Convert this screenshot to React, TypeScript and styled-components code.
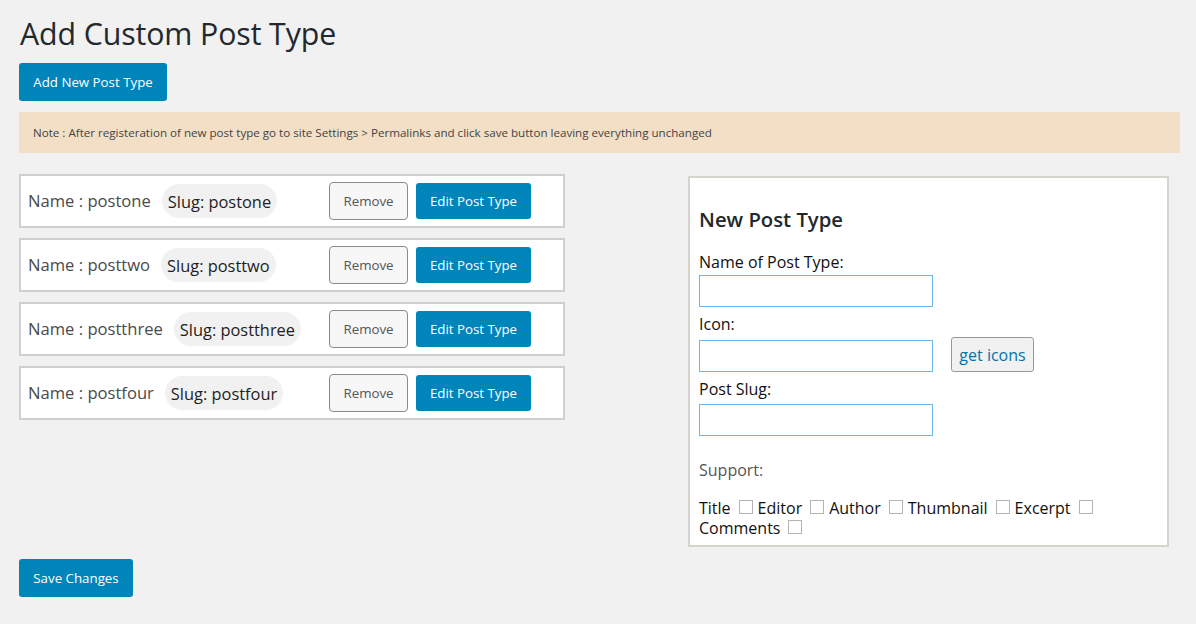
import React from "react";
import styled, { createGlobalStyle } from "styled-components";

const GlobalStyle = createGlobalStyle`
  html, body {
    margin: 0;
    padding: 0;
    background: #f1f1f1;
  }
  body {
    font-family: "Open Sans", "Noto Sans", "Liberation Sans", sans-serif;
    color: #444;
  }
  * { box-sizing: border-box; }
`;

const Page = styled.div`
  padding: 14px 16px 24px 19px;
  width: 1196px;
`;

const Title = styled.h1`
  margin: 0 0 0 1px;
  font-size: 30.3px;
  font-weight: 400;
  line-height: 40px;
  color: #23282d;
  letter-spacing: -0.1px;
`;

const PrimaryButton = styled.button<{ $h?: number; $w: number }>`
  display: inline-flex;
  align-items: center;
  justify-content: center;
  height: ${(p) => p.$h ?? 38}px;
  width: ${(p) => p.$w}px;
  padding: 0;
  border: none;
  border-radius: 3px;
  background: #0085ba;
  color: #fff;
  font-family: inherit;
  font-size: 13.3px;
  cursor: pointer;
`;

const TopAction = styled.div`
  margin-top: 9px;
`;

const Notice = styled.div`
  margin-top: 11px;
  height: 41px;
  display: flex;
  align-items: center;
  padding-left: 14px;
  background: #f2dfc6;
  font-size: 11.6px;
  color: #444;
`;

const Columns = styled.div`
  margin-top: 21px;
  display: grid;
  grid-template-columns: 546px 481px;
  column-gap: 123px;
  align-items: start;
`;

const List = styled.div`
  display: flex;
  flex-direction: column;
  gap: 10px;
`;

const Row = styled.div`
  height: 54px;
  display: flex;
  align-items: center;
  padding: 0 32px 0 7px;
  background: #fff;
  border: 2px solid #cfcfd3;
`;

const Name = styled.span`
  font-size: 16.6px;
  color: #4a4a4a;
  padding-bottom: 1px;
`;

const Slug = styled.span`
  margin-left: 11px;
  height: 34px;
  display: inline-flex;
  align-items: center;
  padding: 0 6px;
  border-radius: 17px;
  background: #f1f1f1;
  font-size: 16.4px;
  color: #1e1e1e;
`;

const RowActions = styled.div`
  margin-left: auto;
  display: flex;
  align-items: center;
  gap: 8px;
`;

const GhostButton = styled.button`
  height: 38px;
  width: 79px;
  border: 1px solid #8a8a8a;
  border-radius: 4px;
  background: #f7f7f7;
  color: #555;
  font-family: inherit;
  font-size: 13.3px;
  cursor: pointer;
`;

const Panel = styled.div`
  margin-top: 2px;
  height: 371px;
  background: #fff;
  border: 2px solid #d6d4cc;
  padding: 27px 10px 0 9px;
  color: #111;
`;

const PanelTitle = styled.h2`
  margin: 0 0 19px;
  font-size: 20.3px;
  font-weight: 600;
  line-height: 28px;
  color: #23282d;
`;

const Label = styled.label`
  display: block;
  font-size: 16px;
  line-height: 21px;
  color: #111;
  margin-bottom: 2px;
`;

const FieldRow = styled.div<{ $padTop?: number }>`
  display: flex;
  align-items: flex-end;
  gap: 18px;
  padding-top: ${(p) => p.$padTop ?? 0}px;
  margin-bottom: 7px;
`;

const TextInput = styled.input`
  width: 234px;
  height: 32px;
  border: 1px solid #6cb6e6;
  background: #fff;
  padding: 0 6px;
  font-family: inherit;
  font-size: 14px;
  outline: none;
`;

const IconButton = styled.button`
  height: 35px;
  width: 83px;
  padding: 0;
  border: 1px solid #999;
  border-radius: 3px;
  background: #f1f1f1;
  color: #0073aa;
  font-family: inherit;
  font-size: 16px;
  cursor: pointer;
`;

const SupportLabel = styled.div`
  margin-top: 24px;
  font-size: 16px;
  line-height: 21px;
  color: #555;
`;

const Supports = styled.div`
  margin-top: 17px;
  display: flex;
  flex-wrap: wrap;
  font-size: 16px;
  line-height: 20px;
  color: #111;
`;

const Option = styled.label`
  display: inline-flex;
  align-items: center;
  white-space: nowrap;
`;

const Check = styled.input.attrs({ type: "checkbox" })`
  appearance: none;
  -webkit-appearance: none;
  flex: none;
  width: 14px;
  height: 14px;
  margin: 0 5px 3px 8px;
  border: 1px solid #b4b4b4;
  background: #fff;
`;

const Footer = styled.div`
  margin-top: 12px;
`;

const postTypes = ["postone", "posttwo", "postthree", "postfour"];
const supports = ["Title", "Editor", "Author", "Thumbnail", "Excerpt", "Comments"];

export default function App() {
  return (
    <>
      <GlobalStyle />
      <Page>
        <Title>Add Custom Post Type</Title>
        <TopAction>
          <PrimaryButton $w={148}>Add New Post Type</PrimaryButton>
        </TopAction>
        <Notice>
          Note : After registeration of new post type go to site Settings &gt; Permalinks and click save button leaving everything unchanged
        </Notice>
        <Columns>
          <List>
            {postTypes.map((t) => (
              <Row key={t}>
                <Name>Name : {t}</Name>
                <Slug>Slug: {t}</Slug>
                <RowActions>
                  <GhostButton>Remove</GhostButton>
                  <PrimaryButton $h={36} $w={115}>Edit Post Type</PrimaryButton>
                </RowActions>
              </Row>
            ))}
          </List>
          <Panel>
            <PanelTitle>New Post Type</PanelTitle>
            <Label>Name of Post Type:</Label>
            <FieldRow>
              <TextInput />
            </FieldRow>
            <Label>Icon:</Label>
            <FieldRow>
              <TextInput />
              <IconButton>get icons</IconButton>
            </FieldRow>
            <Label>Post Slug:</Label>
            <FieldRow $padTop={2}>
              <TextInput />
            </FieldRow>
            <SupportLabel>Support:</SupportLabel>
            <Supports>
              {supports.map((s) => (
                <Option key={s}>
                  {s}
                  <Check />
                </Option>
              ))}
            </Supports>
          </Panel>
        </Columns>
        <Footer>
          <PrimaryButton $w={114}>Save Changes</PrimaryButton>
        </Footer>
      </Page>
    </>
  );
}
